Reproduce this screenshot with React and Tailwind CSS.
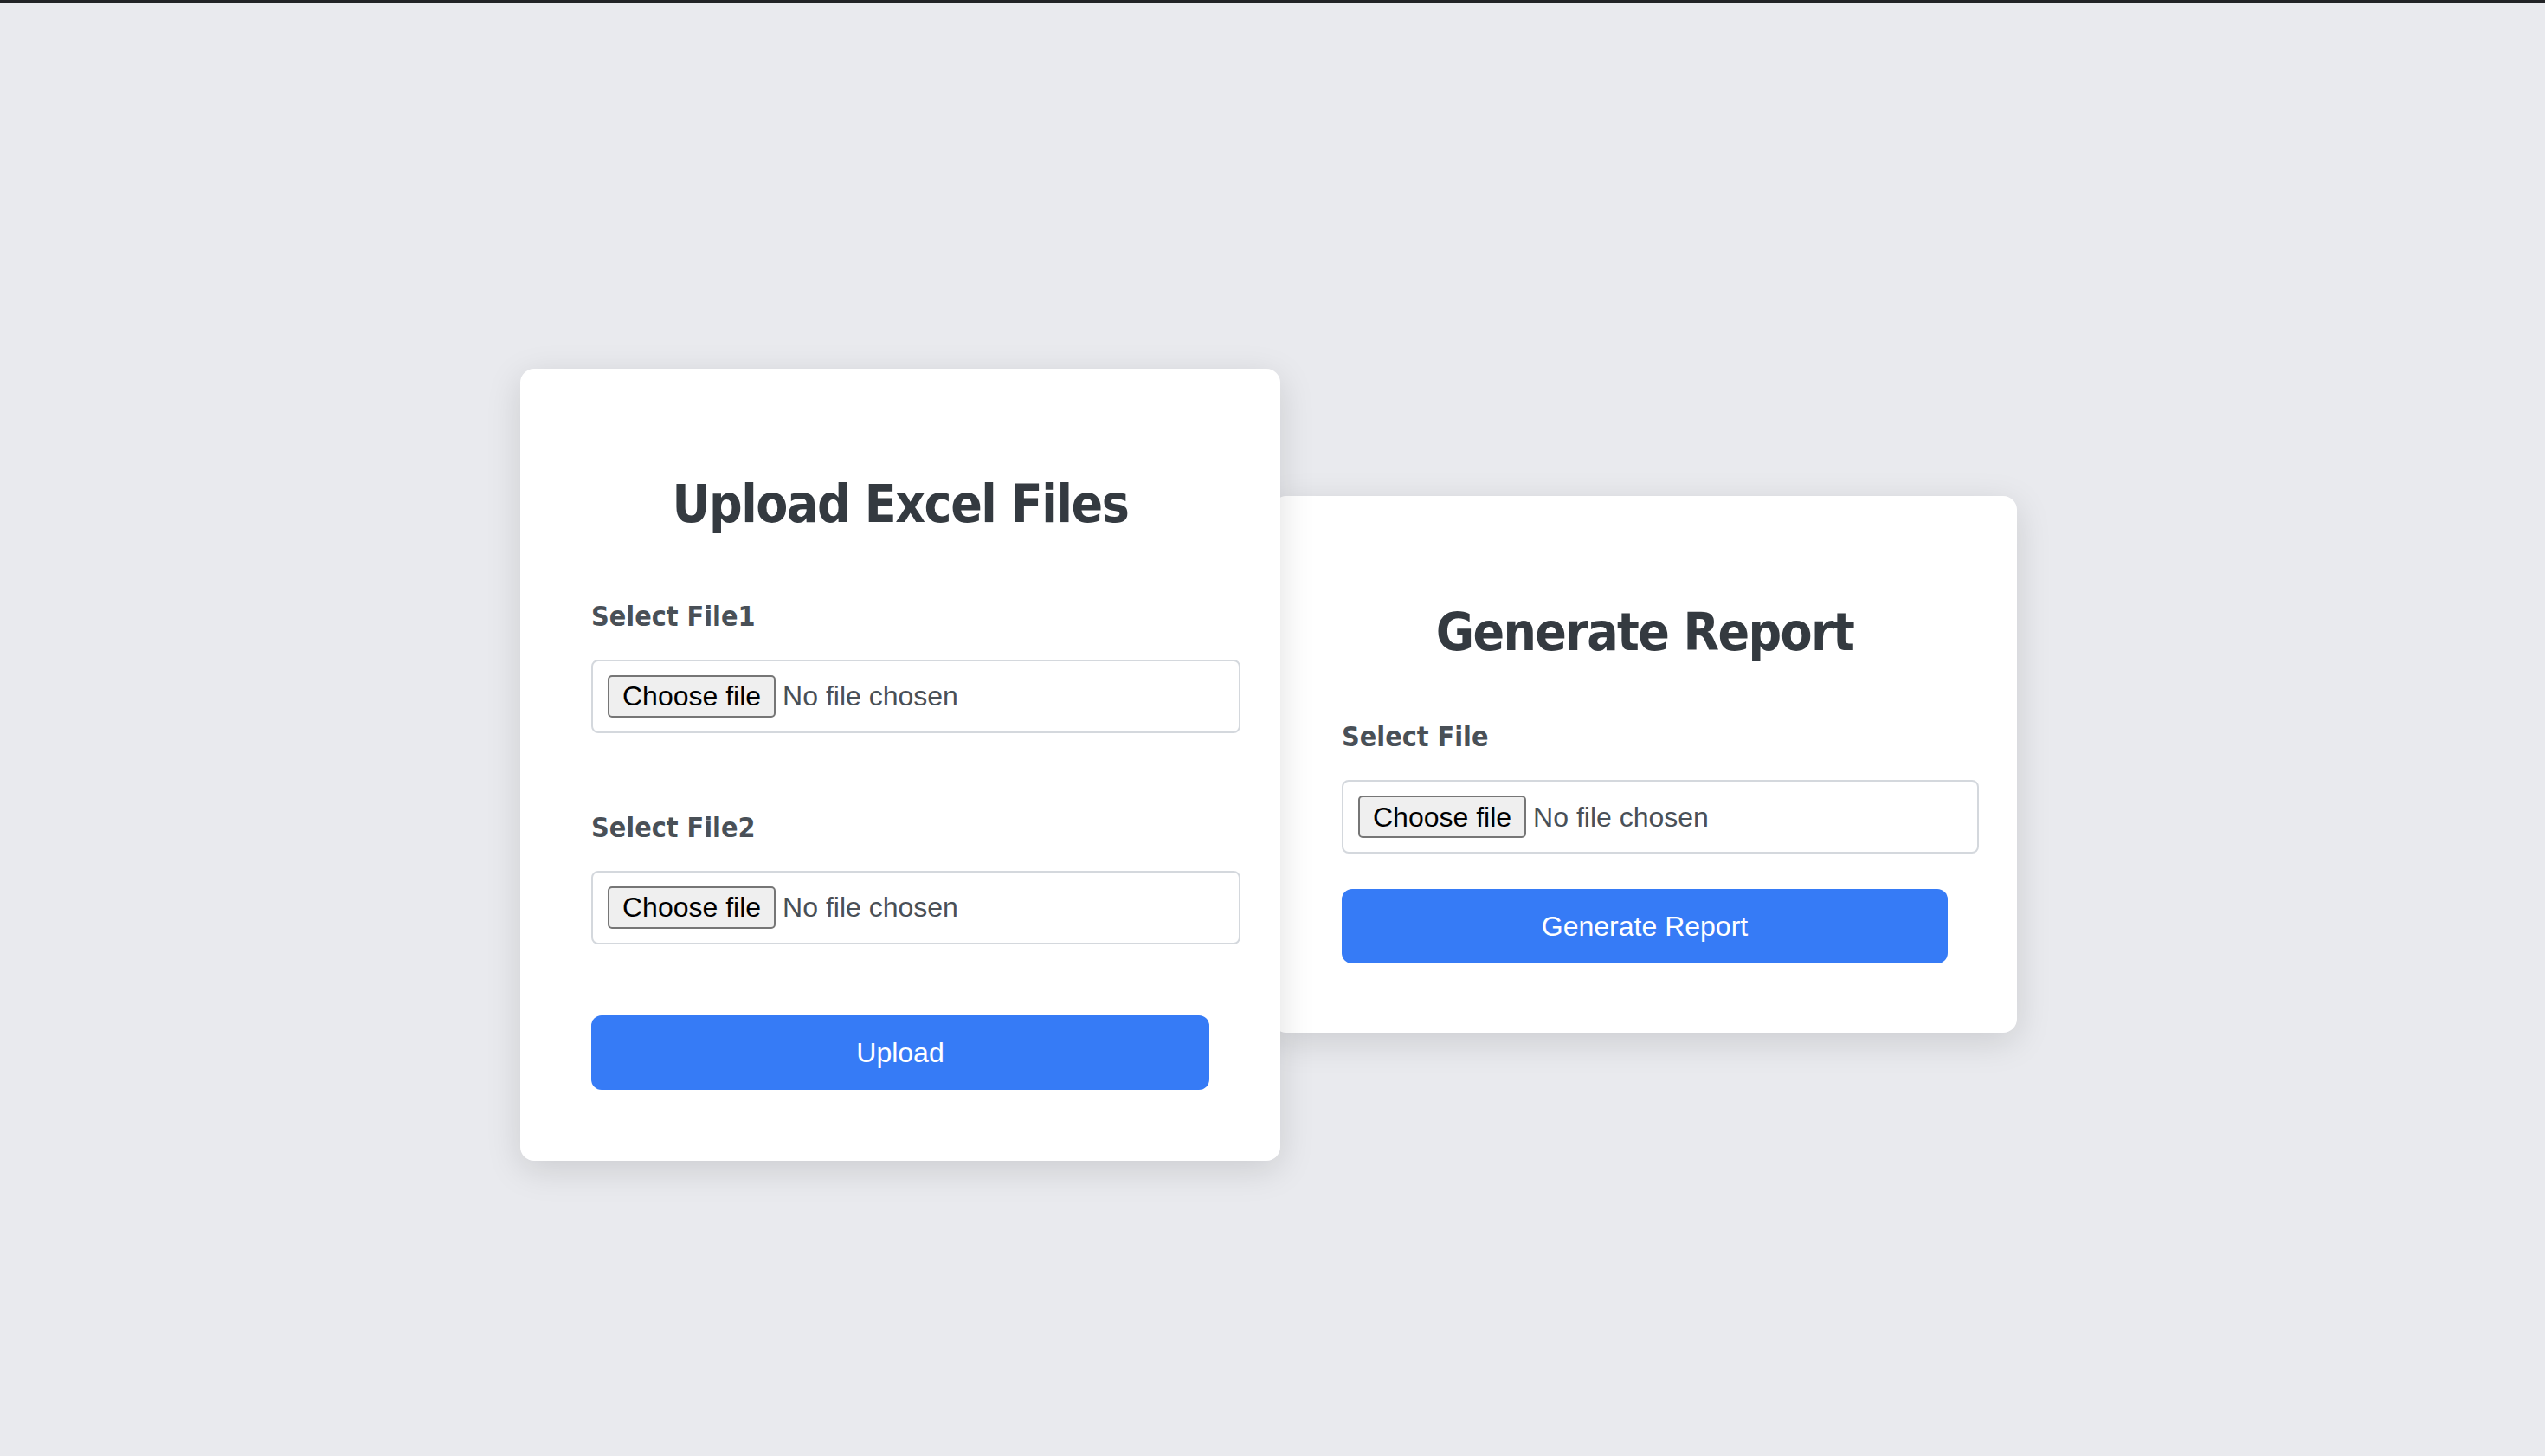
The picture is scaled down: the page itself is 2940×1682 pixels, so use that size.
const heading = { fontFamily: '"DejaVu Sans Condensed", "DejaVu Sans", Verdana, sans-serif', fontStretch: 'condensed' };

function FileField({ label, className = '' }) {
  return (
    <div className={className}>
      <p className="text-[32px] leading-[40px] font-bold text-[#495057]" style={heading}>{label}</p>
      <label className="mt-[30px] flex h-[85px] w-[calc(100%+36px)] cursor-pointer items-center rounded-[8px] border-2 border-[#d4d8dd] bg-white pl-[17px] text-[32px] text-[#495057]">
        <input type="file" className="hidden" />
        <span className="flex h-[49px] items-center rounded-[5px] border-2 border-[#767676] bg-[#efefef] px-[15px] text-black">
          Choose file
        </span>
        <span className="ml-[8px]">No file chosen</span>
      </label>
    </div>
  );
}

function SubmitButton({ children }) {
  return (
    <button className="flex h-[86px] w-full items-center justify-center rounded-[12px] bg-[#367bf6] text-[32px] text-white">
      {children}
    </button>
  );
}

export default function App() {
  return (
    <div className="min-h-screen bg-[#e9eaee]" style={{ fontFamily: '"Liberation Sans", Arial, Helvetica, sans-serif' }}>
      <div className="h-[4px] bg-[#222326]" />
      <div className="box-border flex h-[1678px] items-center justify-center pt-[80px] pr-[9px]">
        {/* Upload card */}
        <div className="relative z-10 w-[878px] rounded-[16px] bg-white px-[82px] pt-[120px] pb-[82px] shadow-[0_10px_40px_rgba(0,0,0,0.13)]">
          <h2 className="text-center text-[60px] leading-[72px] font-bold tracking-[-1.4px] text-[#343a40]" style={heading}>
            Upload Excel Files
          </h2>
          <FileField label="Select File1" className="mt-[74px]" />
          <FileField label="Select File2" className="mt-[89px]" />
          <div className="mt-[82px]">
            <SubmitButton>Upload</SubmitButton>
          </div>
        </div>

        {/* Report card */}
        <div className="-ml-[9px] w-[860px] rounded-[16px] bg-white px-[80px] pt-[121px] pb-[80px] shadow-[0_10px_40px_rgba(0,0,0,0.13)]">
          <h2 className="text-center text-[60px] leading-[72px] font-bold tracking-[-1.6px] text-[#343a40]" style={heading}>
            Generate Report
          </h2>
          <FileField label="Select File" className="mt-[65px]" />
          <div className="mt-[41px]">
            <SubmitButton>Generate Report</SubmitButton>
          </div>
        </div>
      </div>
    </div>
  );
}
